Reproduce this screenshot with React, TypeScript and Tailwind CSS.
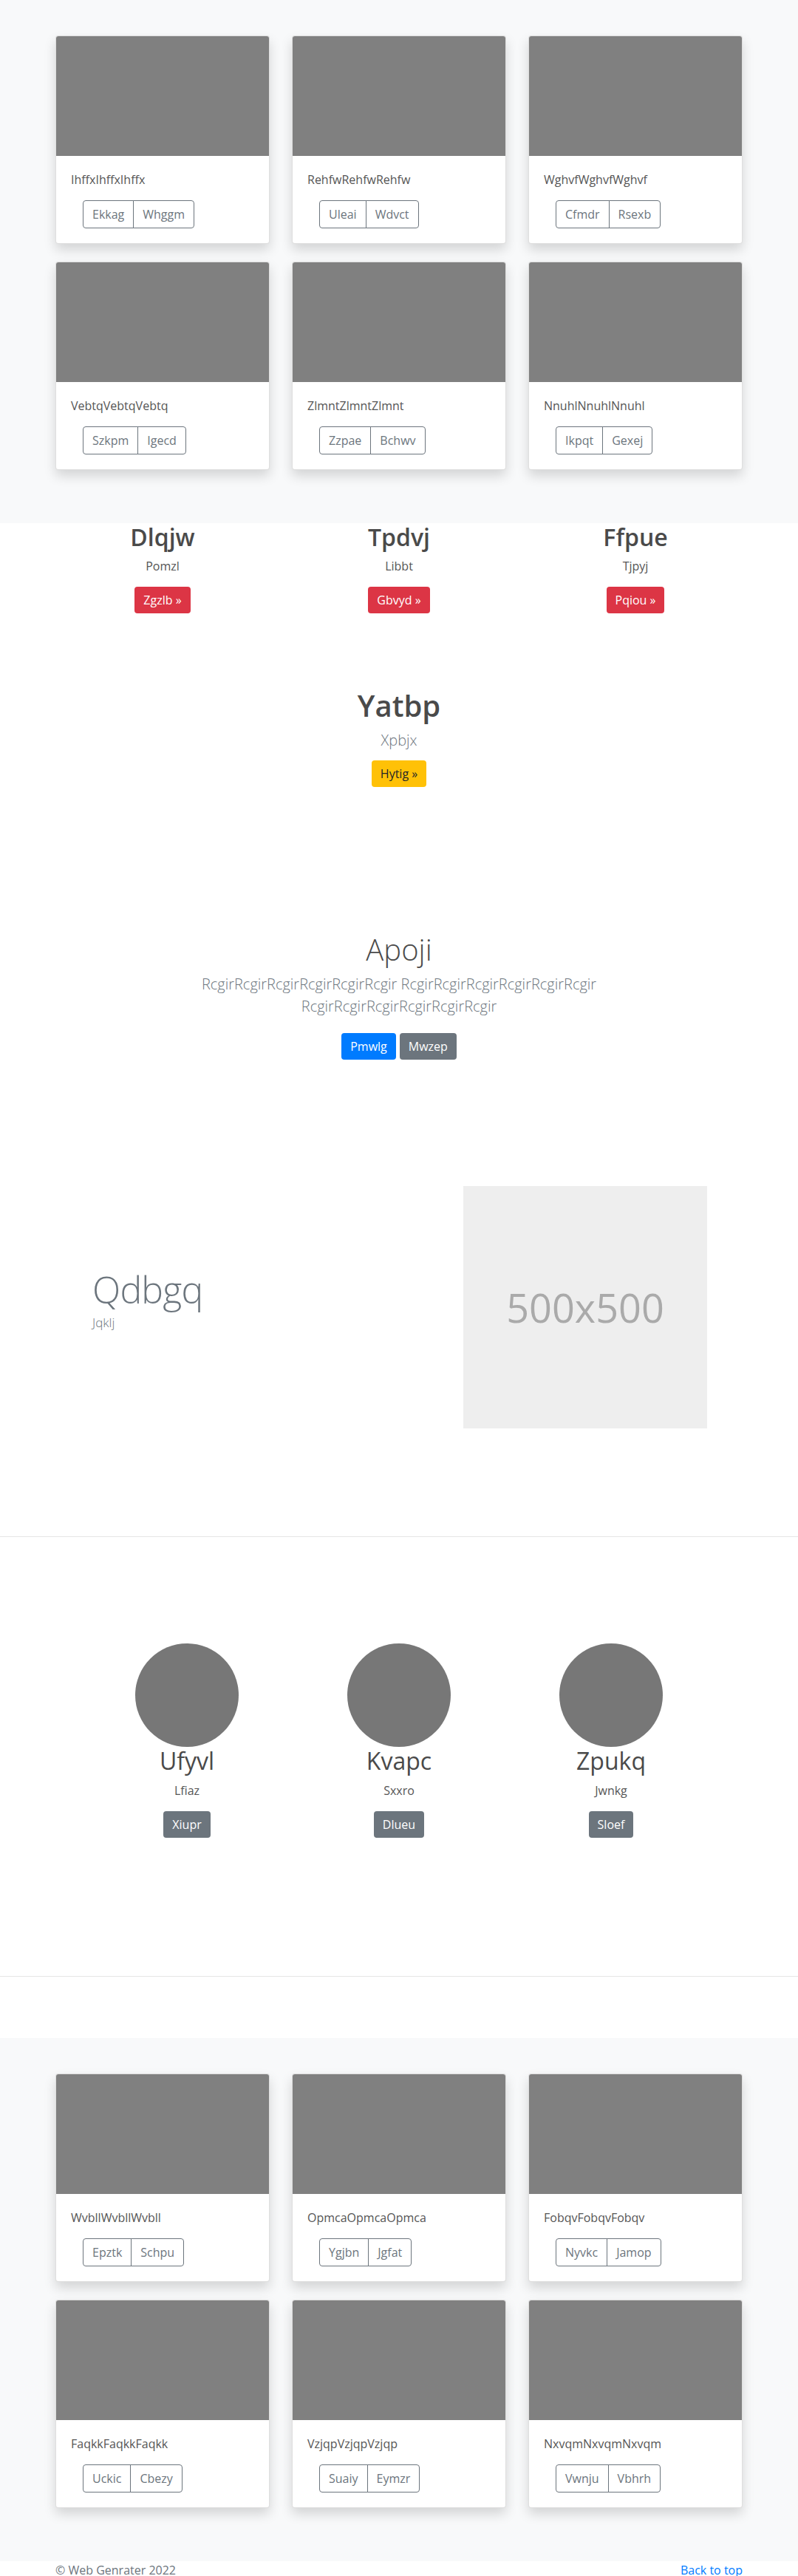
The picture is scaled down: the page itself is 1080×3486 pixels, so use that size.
import React from "react";

type Card = { title: string; a: string; b: string };

const topCards: Card[] = [
  { title: "IhffxIhffxIhffx", a: "Ekkag", b: "Whggm" },
  { title: "RehfwRehfwRehfw", a: "Uleai", b: "Wdvct" },
  { title: "WghvfWghvfWghvf", a: "Cfmdr", b: "Rsexb" },
  { title: "VebtqVebtqVebtq", a: "Szkpm", b: "Igecd" },
  { title: "ZlmntZlmntZlmnt", a: "Zzpae", b: "Bchwv" },
  { title: "NnuhlNnuhlNnuhl", a: "Ikpqt", b: "Gexej" },
];

const bottomCards: Card[] = [
  { title: "WvbllWvbllWvbll", a: "Epztk", b: "Schpu" },
  { title: "OpmcaOpmcaOpmca", a: "Ygjbn", b: "Jgfat" },
  { title: "FobqvFobqvFobqv", a: "Nyvkc", b: "Jamop" },
  { title: "FaqkkFaqkkFaqkk", a: "Uckic", b: "Cbezy" },
  { title: "VzjqpVzjqpVzjqp", a: "Suaiy", b: "Eymzr" },
  { title: "NxvqmNxvqmNxvqm", a: "Vwnju", b: "Vbhrh" },
];

const features = [
  { title: "Dlqjw", text: "Pomzl", btn: "Zgzlb" },
  { title: "Tpdvj", text: "Libbt", btn: "Gbvyd" },
  { title: "Ffpue", text: "Tjpyj", btn: "Pqiou" },
];

const people = [
  { name: "Ufyvl", text: "Lfiaz", btn: "Xiupr" },
  { name: "Kvapc", text: "Sxxro", btn: "Dlueu" },
  { name: "Zpukq", text: "Jwnkg", btn: "Sloef" },
];

function AlbumCard({ card }: { card: Card }) {
  return (
    <div className="overflow-hidden rounded border border-black/[.125] bg-white shadow-[0_8px_16px_rgba(0,0,0,0.15)]">
      <div className="h-[162px] bg-[#808080]" />
      <div className="p-5">
        <p className="mb-4 text-base leading-6 text-[#555]">{card.title}</p>
        <div className="ml-4 flex">
          <button className="rounded-l border border-[#6c757d] px-3 py-1.5 text-base leading-6 text-[#6c757d]">
            {card.a}
          </button>
          <button className="-ml-px rounded-r border border-[#6c757d] px-3 py-1.5 text-base leading-6 text-[#6c757d]">
            {card.b}
          </button>
        </div>
      </div>
    </div>
  );
}

function Album({ cards }: { cards: Card[] }) {
  return (
    <section className="bg-[#f8f9fa] py-12">
      <div className="mx-auto w-[960px] px-[15px]">
        <div className="grid grid-cols-3 gap-x-[30px] gap-y-6 pb-6">
          {cards.map((c) => (
            <AlbumCard key={c.title} card={c} />
          ))}
        </div>
      </div>
    </section>
  );
}

export default function App() {
  return (
    <div className="bg-white font-['Open_Sans',sans-serif] text-[#555]">
      <Album cards={topCards} />

      {/* three columns */}
      <section className="mx-auto grid w-[960px] grid-cols-3 text-center">
        {features.map((f) => (
          <div key={f.title} className="px-[15px]">
            <h2 className="mb-2 text-[32px] font-semibold leading-[1.2] text-[#4a4a4a]">{f.title}</h2>
            <p className="mb-4 leading-6">{f.text}</p>
            <button className="rounded bg-[#dc3545] px-3 py-1.5 leading-6 text-white">{f.btn} »</button>
          </div>
        ))}
      </section>

      <section className="mt-[101px] text-center">
        <h1 className="mb-2 text-[40px] font-semibold leading-[1.2] text-[#4a4a4a]">Yatbp</h1>
        <p className="mb-3 text-xl font-light leading-[30px] text-[#6c757d]">Xpbjx</p>
        <button className="rounded bg-[#ffc107] px-3 py-1.5 leading-6 text-[#212529]">Hytig »</button>
      </section>

      <section className="mt-[196px] text-center">
        <h1 className="mb-2 text-[40px] font-light leading-[1.2] text-[#4a4a4a]">Apoji</h1>
        <p className="mx-auto w-[600px] text-xl font-light leading-[30px] text-[#6c757d]">
          RcgirRcgirRcgirRcgirRcgirRcgir RcgirRcgirRcgirRcgirRcgirRcgir RcgirRcgirRcgirRcgirRcgirRcgir
        </p>
        <div className="mt-[21px] flex justify-center gap-[5px]">
          <button className="rounded bg-[#007bff] px-3 py-1.5 leading-6 text-white">Pmwlg</button>
          <button className="rounded bg-[#6c757d] px-3 py-1.5 leading-6 text-white">Mwzep</button>
        </div>
      </section>

      {/* featurette */}
      <section className="mx-auto mt-[171px] flex w-[960px] items-center">
        <div className="w-[567px] pb-4 pl-[65px]">
          <h2 className="text-[50px] font-light leading-none tracking-[-0.05rem] text-[#6c757d]">Qdbgq</h2>
          <p className="mt-2 text-[17px] font-light leading-6 text-[#6c757d]">Jqklj</p>
        </div>
        <div className="flex h-[328px] w-[330px] items-center justify-center bg-[#eeeeee]">
          <span className="text-[54px] text-[#aaaaaa]">500x500</span>
        </div>
      </section>

      <hr className="mt-[146px] border-black/10" />

      <section className="mx-auto mt-[144px] grid w-[861px] grid-cols-3 text-center">
        {people.map((p) => (
          <div key={p.name} className="flex flex-col items-center">
            <div className="h-[140px] w-[140px] rounded-full bg-[#777]" />
            <h2 className="mb-2 text-[32px] leading-[1.2] text-[#4a4a4a]">{p.name}</h2>
            <p className="mb-4 leading-6">{p.text}</p>
            <button className="rounded bg-[#6c757d] px-3 py-1.5 leading-6 text-white">{p.btn}</button>
          </div>
        ))}
      </section>

      <hr className="mt-[187px] border-black/10" />

      <div className="mt-[83px]">
        <Album cards={bottomCards} />
      </div>

      <footer className="mx-auto flex w-[960px] justify-between px-[15px] leading-6">
        <p className="text-[#6c757d]">© Web Genrater 2022</p>
        <a href="#" className="text-[#007bff]">Back to top</a>
      </footer>
    </div>
  );
}
